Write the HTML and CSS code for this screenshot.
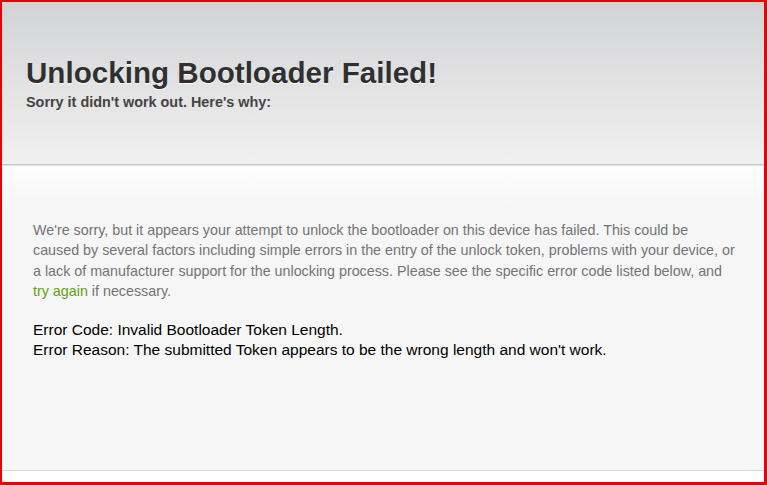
FILE: index.html
```html
<!DOCTYPE html>
<html>
<head>
<meta charset="utf-8">
<link rel="stylesheet" href="styles.css">
</head>
<body>
<div class="frame">
  <header class="hero">
    <h1 class="title">Unlocking Bootloader Failed!</h1>
    <p class="subtitle">Sorry it didn't work out. Here's why:</p>
  </header>
  <main class="content">
    <p class="intro">We're sorry, but it appears your attempt to unlock the bootloader on this device has failed. This could be caused by several factors including simple errors in the entry of the unlock token, problems with your device, or a lack of manufacturer support for the unlocking process. Please see the specific error code listed below, and <a class="link" href="#">try again</a> if necessary.</p>
    <p class="error">Error Code: Invalid Bootloader Token Length.<br>Error Reason: The submitted Token appears to be the wrong length and won't work.</p>
  </main>
  <footer class="foot"></footer>
</div>
</body>
</html>
```
FILE: styles.css
```css
html, body {
  margin: 0;
  padding: 0;
  background: #fff;
}
.frame {
  box-sizing: border-box;
  width: 767px;
  height: 485px;
  border-style: solid;
  border-color: #ee0000;
  border-width: 2px 3px 3px 2px;
  display: flex;
  flex-direction: column;
  font-family: "Liberation Sans", Arial, sans-serif;
  overflow: hidden;
}
.hero {
  height: 163px;
  flex: none;
  box-sizing: border-box;
  padding: 54px 0 0 24px;
  background: linear-gradient(to bottom, #d2d3d5 0%, #e2e2e3 50%, #f0f0f0 100%);
  border-bottom: 1px solid #c8c8c8;
  box-shadow: 0 1px 0 #e2e2e2;
}
.title {
  margin: 0;
  font-size: 29.6px;
  line-height: 34px;
  font-weight: bold;
  color: #2e3032;
  text-shadow: 0 1px 0 #fff;
}
.subtitle {
  margin: 4px 0 0 0;
  font-size: 14.4px;
  line-height: 16px;
  font-weight: bold;
  color: #444;
}
.content {
  flex: 1;
  box-sizing: border-box;
  padding: 54px 28px 0 31px;
  background: linear-gradient(to bottom, #fdfdfd 0px, #f6f6f6 40px, #f6f6f6 100%);
  border-bottom: 1px solid #d8d8d8;
  margin-top: 1px;
}
.intro {
  margin: 0;
  width: 703px;
  font-size: 14.3px;
  line-height: 20.3px;
  color: #747474;
}
.link {
  color: #68a012;
  text-decoration: none;
}
.error {
  margin: 19px 0 0 0;
  font-size: 15.5px;
  line-height: 20px;
  color: #000;
}
.foot {
  height: 11px;
  flex: none;
  background: #fff;
}
```
